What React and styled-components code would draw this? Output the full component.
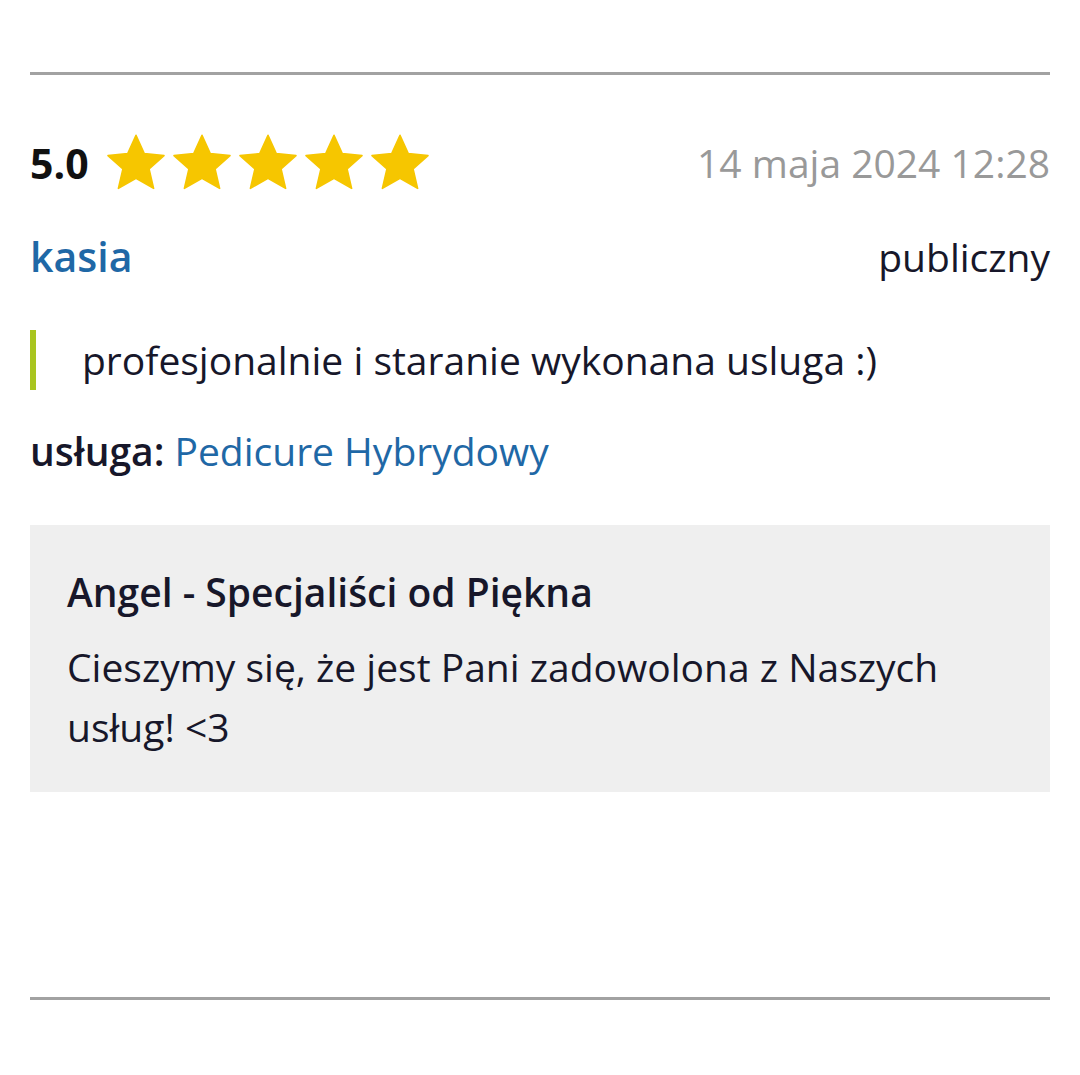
import styled, { createGlobalStyle } from "styled-components";

const GlobalStyle = createGlobalStyle`
  body {
    margin: 0;
    background: #ffffff;
    font-family: "Open Sans", "Noto Sans", sans-serif;
    color: #17172a;
  }
`;

const Star = ({ size = 64 }) => (
  <svg width={size} height={size} viewBox="0 0 24 24">
    <path
      d="M12 1.6l3.1 6.9 7.4.7-5.6 5 1.7 7.3L12 17.7l-6.6 3.8 1.7-7.3-5.6-5 7.4-.7z"
      fill="#f6c600"
      stroke="#f6c600"
      strokeWidth="0.6"
      strokeLinejoin="round"
    />
  </svg>
);

export default function App() {
  return (
    <>
      <GlobalStyle />
      <Page>
        <Review>
          <TopRow>
            <Rating>
              <Score>5.0</Score>
              <Stars>
                {[0, 1, 2, 3, 4].map((i) => (
                  <Star key={i} />
                ))}
              </Stars>
            </Rating>
            <DateText>14 maja 2024 12:28</DateText>
          </TopRow>
          <AuthorRow>
            <Author>kasia</Author>
            <Visibility>publiczny</Visibility>
          </AuthorRow>
          <Quote>profesjonalnie i staranie wykonana usluga :)</Quote>
          <Service>
            <Label>usługa:</Label> <ServiceLink>Pedicure Hybrydowy</ServiceLink>
          </Service>
          <Reply>
            <ReplyTitle>Angel - Specjaliści od Piękna</ReplyTitle>
            <ReplyBody>
              Cieszymy się, że jest Pani zadowolona z Naszych usług! &lt;3
            </ReplyBody>
          </Reply>
        </Review>
      </Page>
    </>
  );
}

const Page = styled.div`
  padding: 72px 30px 0;
  height: 1075px;
  box-sizing: border-box;
`;

const Review = styled.div`
  border-top: 3px solid #a2a2a2;
  border-bottom: 3px solid #a2a2a2;
  padding: 58px 0 205px;
`;

const TopRow = styled.div`
  display: flex;
  align-items: center;
  justify-content: space-between;
  height: 60px;
`;

const Rating = styled.div`
  display: flex;
  align-items: center;
  gap: 15px;
`;

const Score = styled.span`
  font-size: 41px;
  font-weight: 700;
  color: #111;
  line-height: 60px;
`;

const Stars = styled.div`
  display: flex;
  gap: 2px;
`;

const DateText = styled.span`
  font-size: 39px;
  color: #999999;
  line-height: 60px;
`;

const AuthorRow = styled.div`
  display: flex;
  justify-content: space-between;
  align-items: center;
  margin-top: 38px;
  height: 50px;
`;

const Author = styled.span`
  font-size: 41px;
  font-weight: 600;
  color: #1f68a6;
`;

const Visibility = styled.span`
  font-size: 39px;
`;

const Quote = styled.div`
  margin-top: 49px;
  border-left: 6px solid #a9c51f;
  padding-left: 46px;
  font-size: 39px;
  line-height: 60px;
`;

const Service = styled.div`
  margin-top: 36px;
  font-size: 39px;
  line-height: 50px;
`;

const Label = styled.span`
  font-weight: 600;
`;

const ServiceLink = styled.span`
  color: #1f68a6;
`;

const Reply = styled.div`
  margin-top: 49px;
  background: #efefef;
  padding: 42px 37px 35px;
`;

const ReplyTitle = styled.div`
  font-size: 39px;
  font-weight: 600;
  line-height: 50px;
`;

const ReplyBody = styled.div`
  margin-top: 20px;
  font-size: 39px;
  line-height: 60px;
  max-width: 900px;
`;
